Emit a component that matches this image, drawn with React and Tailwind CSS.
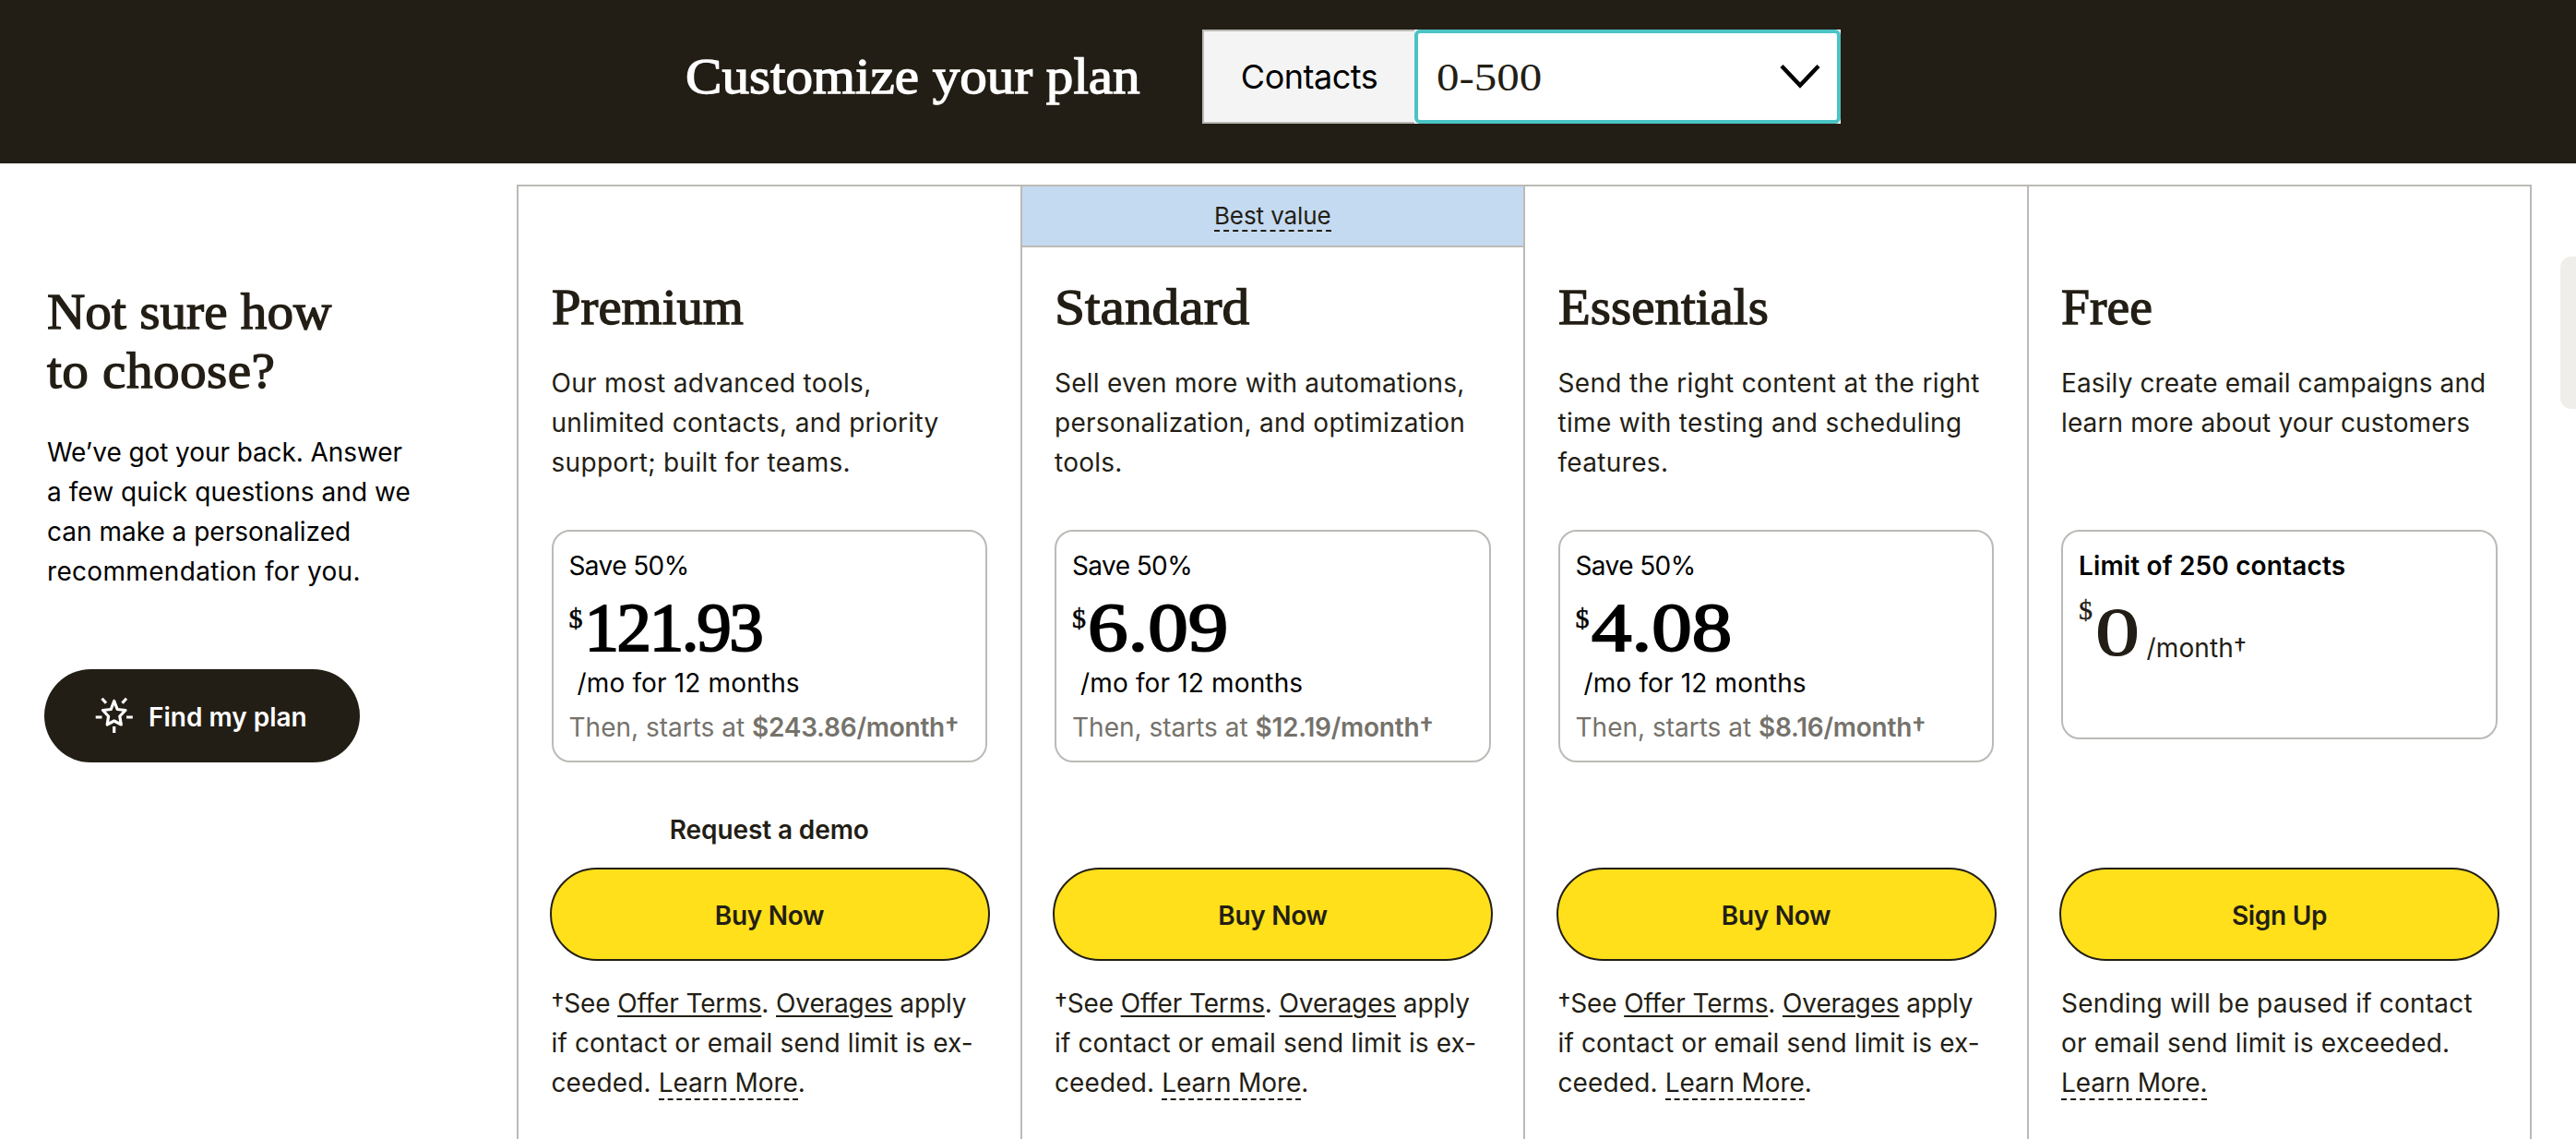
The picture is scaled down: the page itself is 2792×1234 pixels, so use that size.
const PLANS = [
  {
    name: 'Premium',
    nameStretch: 'scale-x-[1.05]',
    description: ['Our most advanced tools,', 'unlimited contacts, and priority', 'support; built for teams.'],
    descriptionTracking: 'tracking-[0.3px]',
    price: '121.93',
    priceStyle: 'tracking-[-2.4px]',
    renewal: '$243.86',
    demo: true,
    cta: 'Buy Now',
  },
  {
    name: 'Standard',
    nameStretch: 'scale-x-[1.1]',
    badge: 'Best value',
    description: ['Sell even more with automations,', 'personalization, and optimization', 'tools.'],
    descriptionTracking: 'tracking-[0.25px]',
    price: '6.09',
    priceStyle: 'scale-x-[1.16]',
    renewal: '$12.19',
    cta: 'Buy Now',
  },
  {
    name: 'Essentials',
    nameStretch: 'scale-x-[1.055]',
    description: ['Send the right content at the right', 'time with testing and scheduling', 'features.'],
    descriptionTracking: 'tracking-[0.33px]',
    price: '4.08',
    priceStyle: 'scale-x-[1.16]',
    renewal: '$8.16',
    cta: 'Buy Now',
  },
  {
    name: 'Free',
    nameStretch: 'scale-x-[1.03]',
    description: ['Easily create email campaigns and', 'learn more about your customers'],
    descriptionTracking: 'tracking-[0.12px]',
    free: true,
    cta: 'Sign Up',
  },
];

function StarIcon() {
  return (
    <svg width="42" height="42" viewBox="0 0 42 42" fill="none" stroke="currentColor" strokeWidth="3.2" strokeLinejoin="round">
      <path d="M20.700 4.500L24.200 13.500L33 14.500L26.800 21L28.300 30L20.700 26L13.200 30L14.600 21L8.500 14.500L17.300 13.500Z" />
      <path d="M0.700 22h6.800M34 22h6.800M20.700 32v7M7.500 1.800l4.500 5M34 1.800l-4.500 5" />
    </svg>
  );
}

function Header() {
  return (
    <header className="flex h-[177px] items-start bg-[#231e15] pl-[743px] pt-8">
      <h2 className="w-[560px] whitespace-nowrap pt-[19px] font-['Liberation_Serif',serif] text-[54px] leading-[64px] text-white [-webkit-text-stroke:1.3px_white]">
        <span className="inline-block origin-left scale-x-[1.095]">Customize your plan</span>
      </h2>
      <div className="flex h-[102px] w-[692px] bg-white">
        <div className="flex w-[230px] items-center justify-center border-2 border-r-0 border-[#bcbab6] bg-[#f4f4f4] text-4xl tracking-[-0.5px] text-black">
          Contacts
        </div>
        <button className="flex flex-1 items-center justify-between rounded-md border-4 border-[#4ac3c4] bg-white pl-5 pr-[18px]">
          <span className="origin-left scale-x-[1.14] font-['Liberation_Serif',serif] text-[43px] leading-none">0-500</span>
          <svg width="44" height="28" viewBox="0 0 44 28" fill="none" stroke="black" strokeWidth="4.5">
            <path d="M2 2.500L22 23.500L42 2.500" />
          </svg>
        </button>
      </div>
    </header>
  );
}

function Helper() {
  return (
    <aside className="w-[560px] shrink-0 pl-[51px] pt-[106px]">
      <h3 className="origin-left scale-x-[1.06] whitespace-nowrap font-['Liberation_Serif',serif] text-[54px] leading-[64px] [-webkit-text-stroke:1.3px_#231e15]">
        Not sure how
        <br />
        <span className="tracking-[0.4px]">to choose?</span>
      </h3>
      <p className="mt-[35px] whitespace-nowrap text-[28px] leading-[43px] text-black">
        <span className="tracking-[-0.08px]">We’ve got your back. Answer</span>
        <br />
        <span className="tracking-[0.06px]">a few quick questions and we</span>
        <br />
        can make a personalized
        <br />
        <span className="tracking-[0.32px]">recommendation for you.</span>
      </p>
      <button className="-ml-[3px] mt-[84px] flex h-[101px] w-[342px] items-center gap-4 rounded-full bg-[#231e15] pl-[55px] text-[28px] font-semibold text-white">
        <StarIcon />
        <span className="whitespace-nowrap pt-0.5">Find my plan</span>
      </button>
    </aside>
  );
}

function PaidPrice({ plan }) {
  return (
    <div className="h-[252px] rounded-[20px] border-2 border-[#bcbab6] pl-[17px] pt-4 text-black">
      <p className="tracking-[-0.6px]">Save 50%</p>
      <div className="mt-[13px] flex h-16 items-start gap-0.5 font-['Liberation_Serif',serif]">
        <span className="mt-1 text-[30px] leading-9 [-webkit-text-stroke:0.6px_black]">$</span>
        <span className={`origin-left text-[75px] leading-[64px] [-webkit-text-stroke:2px_black] ${plan.priceStyle}`}>{plan.price}</span>
      </div>
      <p className="mt-[7px] pl-[9px] tracking-[0.15px]">/mo for 12 months</p>
      <p className="mt-[5px] whitespace-nowrap text-[#75726b]">
        Then, starts at <b className="font-semibold tracking-[-0.25px]">{plan.renewal}/month†</b>
      </p>
    </div>
  );
}

function FreePrice() {
  return (
    <div className="h-[227px] rounded-[20px] border-2 border-[#bcbab6] pl-[17px] pt-4">
      <p className="font-semibold tracking-[0.15px] text-black">Limit of 250 contacts</p>
      <div className="mt-2 flex items-start">
        <span className="font-['Liberation_Serif',serif] text-[30px] leading-9 [-webkit-text-stroke:0.4px_#231e15]">$</span>
        <span className="ml-[3px] mt-2.5 origin-left scale-x-[1.28] font-['Liberation_Serif',serif] text-[75px] leading-[64px] [-webkit-text-stroke:1.2px_#231e15]">0</span>
        <span className="ml-[18px] mt-[38px] tracking-[0.15px]">/month†</span>
      </div>
    </div>
  );
}

function Terms({ free }) {
  if (free) {
    return (
      <p className="mt-[25px] whitespace-nowrap tracking-[0.2px]">
        Sending will be paused if contact
        <br />
        or email send limit is exceeded.
        <br />
        <a className="border-b-2 border-dashed border-[#231e15] tracking-[-0.15px]">Learn More.</a>
      </p>
    );
  }
  return (
    <p className="mt-[25px] whitespace-nowrap tracking-[0.12px]">
      <span className="tracking-[-0.12px]">
        †See <a className="underline decoration-2 underline-offset-[3px]">Offer Terms</a>.{' '}
        <a className="underline decoration-2 underline-offset-[3px]">Overages</a> apply
      </span>
      <br />
      if contact or email send limit is ex-
      <br />
      ceeded. <a className="border-b-2 border-dashed border-[#231e15] tracking-[-0.1px]">Learn More</a>.
    </p>
  );
}

function PlanColumn({ plan }) {
  return (
    <section className="border-r-2 border-[#bcbab6]">
      {plan.badge ? (
        <div className="flex h-[66px] items-center justify-center border-b-2 border-[#bcbab6] bg-[#c4daf1] pt-px">
          <span className="border-b-2 border-dashed border-[#231e15] text-[26px] leading-[31px] tracking-[-0.1px]">{plan.badge}</span>
        </div>
      ) : (
        <div className="h-[66px]" />
      )}
      <div className="px-[35.5px] pt-[33px] text-[28px] leading-[43px]">
        <h3 className={`origin-left font-['Liberation_Serif',serif] text-[54px] leading-[64px] [-webkit-text-stroke:1.3px_#231e15] ${plan.nameStretch}`}>
          {plan.name}
        </h3>
        <p className={`mt-[29px] h-[129px] whitespace-nowrap ${plan.descriptionTracking}`}>
          {plan.description.map((line) => (
            <span key={line} className="block">{line}</span>
          ))}
        </p>
        <div className="mt-[51px] h-[252px]">{plan.free ? <FreePrice /> : <PaidPrice plan={plan} />}</div>
        <div className="mt-[52px] h-[43px] text-center font-semibold tracking-[-0.1px]">{plan.demo && 'Request a demo'}</div>
        <button className="-mx-0.5 mt-[19px] h-[101px] w-[477px] rounded-full border-2 border-[#231e15] bg-[#ffe01b] pt-[3px] font-semibold tracking-[-0.3px]">
          {plan.cta}
        </button>
        <Terms free={plan.free} />
      </div>
    </section>
  );
}

export default function App() {
  return (
    <div className="relative h-[1234px] w-[2792px] overflow-hidden bg-white font-['Inter',sans-serif] text-[#231e15]">
      <Header />
      <main className="flex pt-[23px]">
        <Helper />
        <div className="grid h-[1034px] w-[2184px] grid-cols-4 border-l-2 border-t-2 border-[#bcbab6]">
          {PLANS.map((plan) => (
            <PlanColumn key={plan.name} plan={plan} />
          ))}
        </div>
      </main>
      {/* Feedback tab, hanging off the right edge */}
      <div className="absolute right-0 top-[278px] h-[165px] w-[17px] rounded-l-xl bg-[#efeeea]" />
    </div>
  );
}
